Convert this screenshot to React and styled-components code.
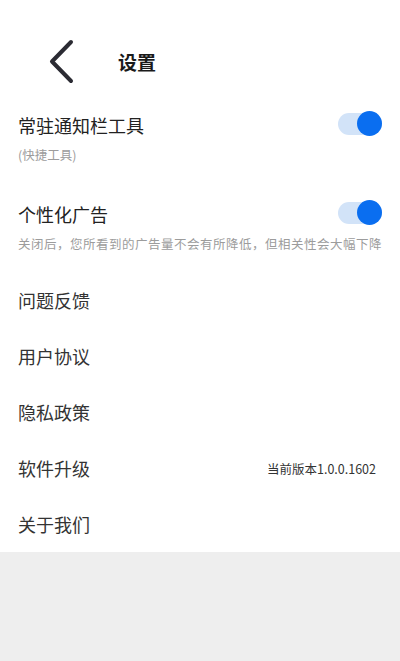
import React, { useState } from "react";
import styled, { createGlobalStyle } from "styled-components";

const GlobalStyle = createGlobalStyle`
  html, body {
    margin: 0;
    padding: 0;
    background: #eeeeee;
    font-family: "Noto Sans CJK SC", "Noto Sans", Roboto, sans-serif;
  }
  * { box-sizing: border-box; }
`;

const Page = styled.div`
  min-height: 100vh;
  background: #eeeeee;
`;

const Panel = styled.div`
  background: #fff;
`;

const Header = styled.div`
  height: 94px;
  padding-top: 40px;
  display: flex;
  align-items: flex-start;
`;

const BackButton = styled.button`
  width: 44px;
  height: 44px;
  margin-left: 41px;
  padding: 0;
  border: none;
  background: none;
  display: flex;
  align-items: center;
  justify-content: center;
`;

const Title = styled.h1`
  margin: 0 0 0 33px;
  height: 44px;
  line-height: 44px;
  font-size: 19px;
  font-weight: 700;
  color: #1a1a1a;
`;

const SwitchItem = styled.div`
  padding: 19px 18px;
`;

const TitleRow = styled.div`
  display: flex;
  align-items: center;
  justify-content: space-between;
  height: 24px;
`;

const Label = styled.div`
  font-size: 18px;
  line-height: 24px;
  color: #222;
`;

const Desc = styled.div`
  margin-top: 9px;
  font-size: 12.5px;
  line-height: 18px;
  color: #9c9c9c;
  letter-spacing: ${(p) => p.$spacing || "0"};
  white-space: nowrap;
`;

const Track = styled.button`
  position: relative;
  width: 44px;
  height: 22px;
  margin: 0 0 3px 0;
  padding: 0;
  border: none;
  border-radius: 11px;
  background: ${(p) => (p.$on ? "#d2e3f8" : "#dddddd")};
  cursor: pointer;
`;

const Knob = styled.span`
  position: absolute;
  top: -1.5px;
  left: ${(p) => (p.$on ? "19px" : "0")};
  width: 25px;
  height: 25px;
  border-radius: 50%;
  background: ${(p) => (p.$on ? "#0a6ef0" : "#fafafa")};
`;

const ListItem = styled.div`
  height: 56px;
  padding: 0 24px 0 18px;
  display: flex;
  align-items: center;
  justify-content: space-between;
`;

const ItemText = styled.span`
  font-size: 18px;
  color: #333;
`;

const Version = styled.span`
  font-size: 12.5px;
  color: #333;
`;

const Toggle = ({ on, onClick }) => (
  <Track $on={on} onClick={onClick}>
    <Knob $on={on} />
  </Track>
);

const ChevronLeft = () => (
  <svg width="30" height="46" viewBox="0 0 30 46">
    <path
      d="M23 3 L4 22.5 L23 42"
      fill="none"
      stroke="#2b2b33"
      strokeWidth="4"
      strokeLinecap="round"
      strokeLinejoin="round"
    />
  </svg>
);

const items = ["问题反馈", "用户协议", "隐私政策", "软件升级", "关于我们"];

export default function App() {
  const [tool, setTool] = useState(true);
  const [ads, setAds] = useState(true);

  return (
    <Page>
      <GlobalStyle />
      <Panel>
        <Header>
          <BackButton>
            <ChevronLeft />
          </BackButton>
          <Title>设置</Title>
        </Header>

        <SwitchItem>
          <TitleRow>
            <Label>常驻通知栏工具</Label>
            <Toggle on={tool} onClick={() => setTool(!tool)} />
          </TitleRow>
          <Desc>(快捷工具)</Desc>
        </SwitchItem>

        <SwitchItem>
          <TitleRow>
            <Label>个性化广告</Label>
            <Toggle on={ads} onClick={() => setAds(!ads)} />
          </TitleRow>
          <Desc $spacing="0.5px">
            关闭后，您所看到的广告量不会有所降低，但相关性会大幅下降
          </Desc>
        </SwitchItem>

        {items.map((t) => (
          <ListItem key={t}>
            <ItemText>{t}</ItemText>
            {t === "软件升级" && <Version>当前版本1.0.0.1602</Version>}
          </ListItem>
        ))}
      </Panel>
    </Page>
  );
}
